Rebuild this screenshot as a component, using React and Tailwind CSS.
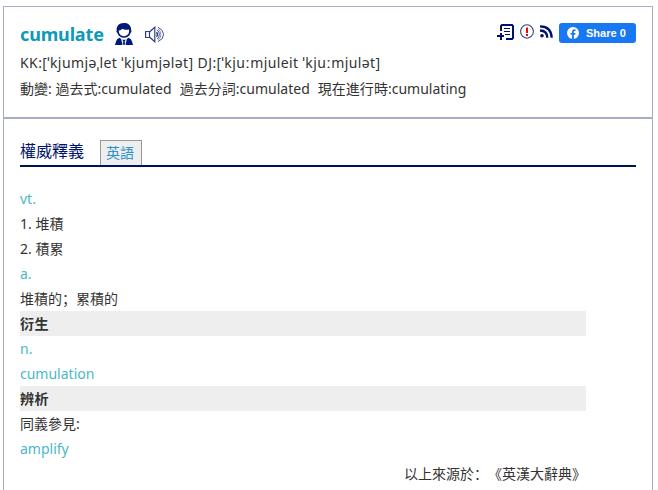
const latin = "font-['Noto_Sans','Noto_Sans_CJK_SC',sans-serif]";

function AddListIcon() {
  return (
    <svg width="18" height="17" viewBox="0 0 18 17" className="shrink-0">
      <g fill="none" stroke="#00126b" strokeWidth="2">
        <path d="M4 7V2L5 1H15L16 2V14L15 15H9" />
        <path d="M0 12H7M4 9V16" />
      </g>
      <path d="M7 4.5H13M7 7.5H13M8 10.5H13" stroke="#00126b" strokeWidth="1" />
    </svg>
  );
}

function AlertIcon() {
  return (
    <svg width="14" height="15" viewBox="0 0 14 15" className="ml-[5px] shrink-0">
      <ellipse cx="7" cy="7.5" rx="6.4" ry="6.7" fill="#fff" stroke="#33407f" strokeWidth="1.1" />
      <path d="M6 3.5H8V9H6ZM6 10H8V12H6Z" fill="#f5000c" />
    </svg>
  );
}

function FeedIcon() {
  return (
    <svg width="13" height="13" viewBox="0 0 13 13" className="ml-[6px] mt-[1px] shrink-0">
      <circle cx="2" cy="10.8" r="1.8" fill="#00126b" />
      <g fill="none" stroke="#00126b" strokeWidth="2.3">
        <path d="M0 5.5Q7.2 5.6 7.3 12.8" />
        <path d="M0 1.4Q11.4 1.6 11.7 12.8" />
      </g>
    </svg>
  );
}

function PersonIcon() {
  return (
    <svg width="18" height="22" viewBox="0 0 18 22" className="shrink-0">
      <path
        d="M1.7 7.5C1.2 3 4 0 8 0.2C11-.4 16.4 1 16.2 7.5C16.7 8.3 16.5 9.5 15.7 9.8C14.7 13 12 14.8 9 14.8C6 14.8 3.3 13 2.3 9.8C1.3 9.5 1.2 8.3 1.7 7.5Z"
        fill="#00187a"
      />
      <path
        d="M3.8 7.6C5.8 7.6 6.4 6.4 7.2 5.8C9 7 12 7 14 6.6C14.8 10.5 12.4 13.2 9 13.2C5.8 13.2 3.6 11 3.8 7.6Z"
        fill="#fff"
      />
      <path d="M0 22L1 18.5Q1.5 16 4.5 14.8L6.2 16L7.5 22ZM18 22L17 18.5Q16.5 16 13.5 14.8L11.8 16L10.5 22Z" fill="#00187a" />
      <path d="M7 16.5H11L10 18.5L10.6 22H7.4L8 18.5Z" fill="#00187a" stroke="#fff" strokeWidth=".5" />
    </svg>
  );
}

function SpeakerIcon() {
  return (
    <svg width="20" height="17" viewBox="0 0 20 17" className="shrink-0">
      <g fill="none" stroke="#33407f">
        <path d="M.6 5.5H4.5V11.5H.6Z" strokeWidth="1.2" />
        <path d="M4.5 6L9.8 1.2V15.8L4.5 11" strokeWidth="1.2" />
        <path d="M11.5 6.3Q13.6 8.5 11.5 10.7" strokeWidth="1.4" />
        <path d="M12.2 3.9Q16.6 8.5 12.2 13.1M13 1.3Q18.6 4 18.6 8.5Q18.6 13 13 15.7" strokeWidth=".9" />
        <path d="M13.2 2.8Q18.6 8.5 13.2 14.2" strokeWidth=".6" />
      </g>
    </svg>
  );
}

function ShareButton() {
  return (
    <div className="ml-[6px] flex h-5 w-[77px] shrink-0 items-center rounded-[3px] bg-[#1877f2] pl-2 font-['Liberation_Sans',sans-serif] text-[11px] font-bold text-white">
      <svg width="12" height="12" viewBox="0 0 12 12" className="mr-[7px] shrink-0">
        <circle cx="6" cy="6" r="6" fill="#fff" />
        <path
          d="M5.1 12V7.8H3.6V6H5.1V4.7C5.1 3.1 6 2.3 7.4 2.3L8.6 2.4V3.9H7.8C7.1 3.9 6.9 4.3 6.9 4.8V6H8.5L8.2 7.8H6.9V12Z"
          fill="#1877f2"
        />
      </svg>
      <span className="whitespace-pre pt-[2px]">Share 0</span>
    </div>
  );
}

function Row({ className = "", children }) {
  return <div className={`h-[25px] whitespace-pre leading-[25px] ${className}`}>{children}</div>;
}

export default function App() {
  return (
    <div className={`h-[490px] w-[658px] overflow-hidden bg-white pl-[3px] pt-[6px] text-sm text-[#333] ${latin}`}>
      <div className="h-[490px] w-[650px] border border-[#a9adc4]">
        <header className="h-[112px] border-b-2 border-[#a9adc4] pl-4 pr-4">
          <div className="flex h-[43px] items-start">
            <h1 className="mt-[13px] w-[95px] whitespace-nowrap text-[18px] font-bold leading-[28px] tracking-[-0.15px] text-[#0c99ba]">
              cumulate
            </h1>
            <div className="mt-4">
              <PersonIcon />
            </div>
            <div className="ml-[12px] mt-[19px]">
              <SpeakerIcon />
            </div>
            <div className="ml-auto mt-4 flex items-start">
              <div className="mt-[1px] flex items-start">
                <AddListIcon />
                <AlertIcon />
                <FeedIcon />
              </div>
              <ShareButton />
            </div>
          </div>
          <Row className="tracking-[0.41px]">KK:[ˈkjumjəˌlet ˈkjumjələt] DJ:[ˈkjuːmjuleit ˈkjuːmjulət]</Row>
          <div className="flex h-[26px] gap-2 whitespace-pre pt-px leading-[25px] tracking-[0.02px]">
            <span>動變: 過去式:cumulated</span>
            <span>過去分詞:cumulated</span>
            <span>現在進行時:cumulating</span>
          </div>
        </header>
        <section className="pl-4 pr-4 pt-[21px]">
          <div className="flex h-[27px] items-start border-b-2 border-[#00125e]">
            <h2 className="w-20 text-base leading-[22px] text-[#00126b]">權威釋義</h2>
            <div className="h-[25px] w-[42px] border border-b-0 border-[#999] bg-[#eee] pl-[5px] leading-6 text-[#2b91d0]">
              英語
            </div>
          </div>
          <div className="mt-[19px] w-[566px]">
            <Row className="text-[#4bb7c9]">vt.</Row>
            <Row>1. 堆積</Row>
            <Row>2. 積累</Row>
            <Row className="text-[#4bb7c9]">a.</Row>
            <Row>堆積的；累積的</Row>
            <Row className="bg-[#eee] font-bold tracking-[0.5px]">衍生</Row>
            <Row className="text-[#4bb7c9]">n.</Row>
            <Row className="text-[#4bb7c9]">cumulation</Row>
            <Row className="bg-[#eee] font-bold tracking-[0.5px]">辨析</Row>
            <Row>同義參見:</Row>
            <Row className="text-[#4bb7c9]">amplify</Row>
            <Row className="text-right [text-spacing-trim:space-all]">以上來源於：《英漢大辭典》</Row>
          </div>
        </section>
      </div>
    </div>
  );
}
